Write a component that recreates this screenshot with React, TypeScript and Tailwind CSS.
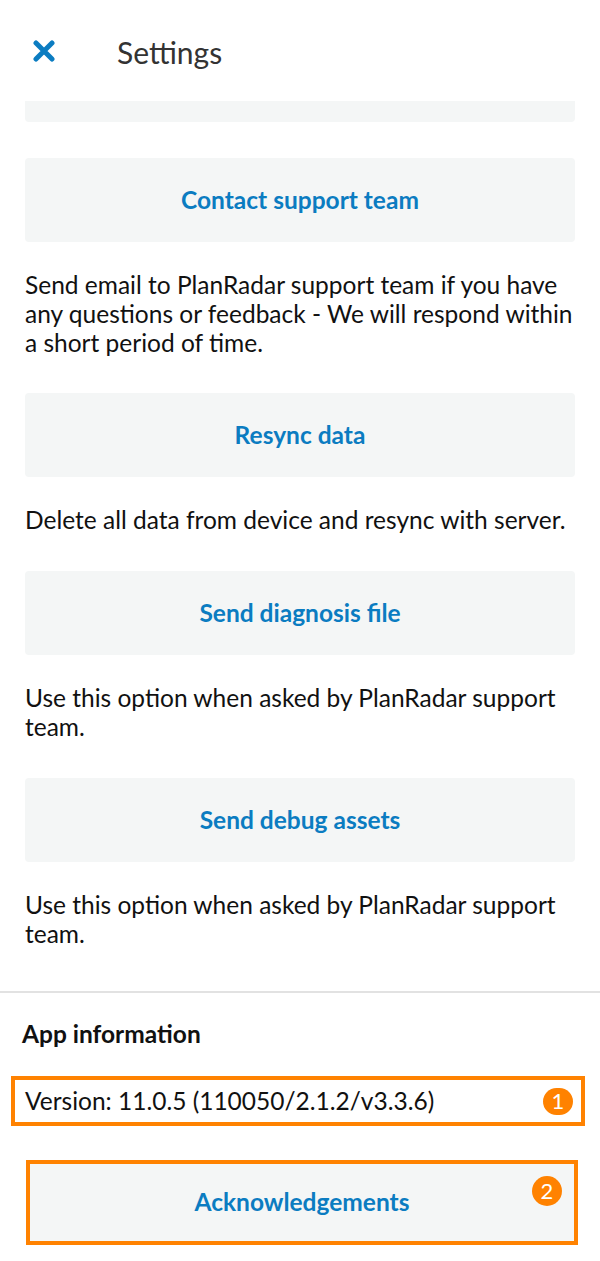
import React from "react";

const Btn = ({ label }: { label: string }) => (
  <div className="mx-[25px] h-[84px] rounded-[4px] bg-[#f4f6f6] flex items-center justify-center">
    <span className="text-[24.5px] font-bold text-[#0b7cc1] leading-none">{label}</span>
  </div>
);

const Desc = ({ children }: { children: React.ReactNode }) => (
  <p className="ml-[25px] mr-[16px] mt-[28px] text-[24.5px] leading-[29px] text-[#111]">{children}</p>
);

export default function App() {
  return (
    <div className="w-[600px] h-[1261px] bg-white font-['Lato',sans-serif] overflow-hidden">
      <header className="h-[101px] flex items-center">
        <div className="w-[117px] flex items-center pl-[33px]">
          <svg width="22" height="22" viewBox="0 0 22 22">
            <path d="M3 3 L19 19 M19 3 L3 19" stroke="#0b7cc1" strokeWidth="5" strokeLinecap="round" />
          </svg>
        </div>
        <h1 className="text-[30px] text-[#333] leading-none mt-[2px]">Settings</h1>
      </header>
      <div className="mx-[25px] h-[21px] rounded-b-[4px] bg-[#f4f6f6]" />
      <div className="h-[36px]" />
      <Btn label="Contact support team" />
      <Desc>
        Send email to PlanRadar support team if you have any questions or feedback - We will respond within a short
        period of time.
      </Desc>
      <div className="h-[36px]" />
      <Btn label="Resync data" />
      <Desc>Delete all data from device and resync with server.</Desc>
      <div className="h-[37px]" />
      <Btn label="Send diagnosis file" />
      <Desc>Use this option when asked by PlanRadar support team.</Desc>
      <div className="h-[37px]" />
      <Btn label="Send debug assets" />
      <Desc>Use this option when asked by PlanRadar support team.</Desc>
      <div className="h-[43px]" />
      <div className="h-[2px] bg-[#e2e2e2]" />
      <div className="pl-[22px] pt-[26px] text-[24.5px] font-bold leading-[29px] text-[#111]">App information</div>
      <div className="mt-[28px] ml-[11px] mr-[15px] h-[50px] border-[4px] border-[#ff8200] flex items-center justify-between pl-[10px] pr-[8px]">
        <span className="text-[24.5px] text-[#111] leading-none">Version: 11.0.5 (110050/2.1.2/v3.3.6)</span>
        <span className="w-[30px] h-[27px] rounded-full bg-[#ff8200] text-white text-[22px] leading-none flex items-center justify-center">
          1
        </span>
      </div>
      <div className="mt-[34px] ml-[26px] mr-[22px] h-[85px] border-[4px] border-[#ff8200] bg-[#f4f6f6] relative flex items-center justify-center">
        <span className="text-[24.5px] font-bold text-[#0b7cc1] leading-none">Acknowledgements</span>
        <span className="absolute right-[12px] top-[12px] w-[30px] h-[30px] rounded-full bg-[#ff8200] text-white text-[22px] leading-none flex items-center justify-center">
          2
        </span>
      </div>
    </div>
  );
}
